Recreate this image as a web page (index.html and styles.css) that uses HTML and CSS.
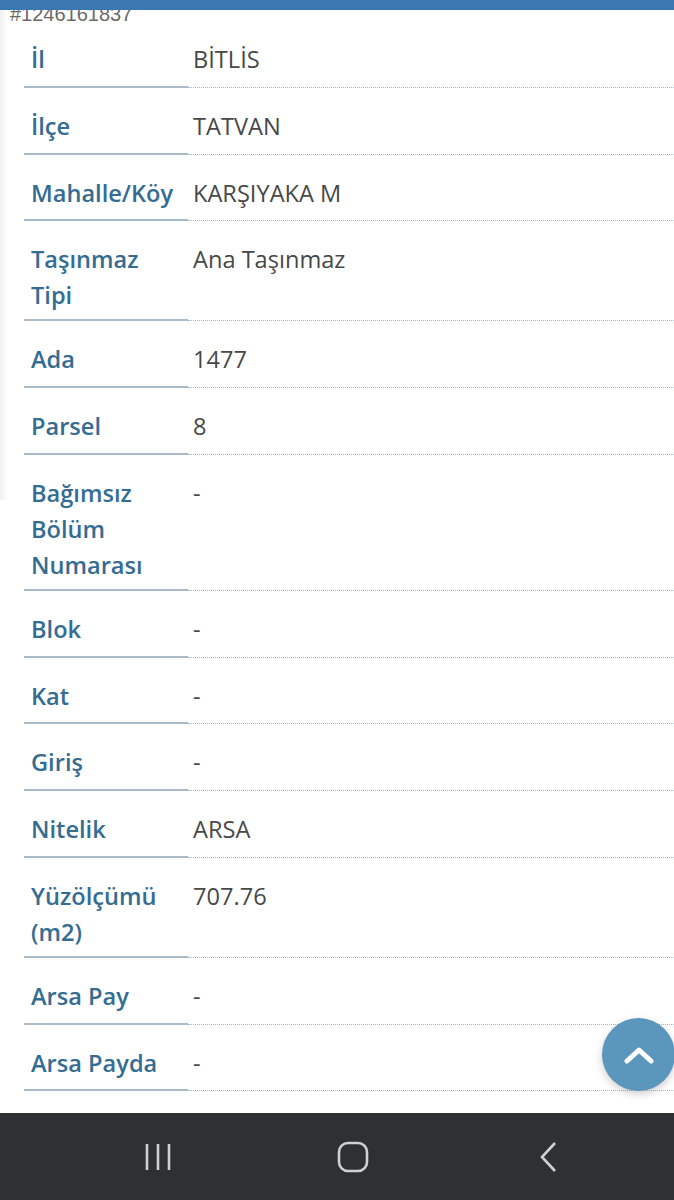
FILE: index.html
```html
<!DOCTYPE html>
<html lang="tr">
<head>
    <meta charset="UTF-8">
    <meta name="viewport" content="width=device-width, initial-scale=1.0">
    <title>Taşınmaz Bilgileri</title>
    <link rel="stylesheet" href="styles.css">
</head>
<body>
<div class="top-bar"></div>
<div class="sheet">
    <div class="record-id">#1246161837</div>
    <dl class="info-list">
        <div class="info-row"><dt>İl</dt><dd>BİTLİS</dd></div>
        <div class="info-row"><dt>İlçe</dt><dd>TATVAN</dd></div>
        <div class="info-row"><dt>Mahalle/Köy</dt><dd>KARŞIYAKA M</dd></div>
        <div class="info-row"><dt>Taşınmaz Tipi</dt><dd>Ana Taşınmaz</dd></div>
        <div class="info-row"><dt>Ada</dt><dd>1477</dd></div>
        <div class="info-row"><dt>Parsel</dt><dd>8</dd></div>
        <div class="info-row"><dt>Bağımsız Bölüm Numarası</dt><dd>-</dd></div>
        <div class="info-row"><dt>Blok</dt><dd>-</dd></div>
        <div class="info-row"><dt>Kat</dt><dd>-</dd></div>
        <div class="info-row"><dt>Giriş</dt><dd>-</dd></div>
        <div class="info-row"><dt>Nitelik</dt><dd>ARSA</dd></div>
        <div class="info-row"><dt>Yüzölçümü (m2)</dt><dd>707.76</dd></div>
        <div class="info-row"><dt>Arsa Pay</dt><dd>-</dd></div>
        <div class="info-row"><dt>Arsa Payda</dt><dd>-</dd></div>
    </dl>
</div>

<button class="scroll-top" type="button" aria-label="Yukarı">
    <svg width="30" height="18" viewBox="0 0 30 18">
        <path d="M3 15 L15 4 L27 15" fill="none" stroke="#fff" stroke-width="5" stroke-linecap="round" stroke-linejoin="round"/>
    </svg>
</button>

<nav class="system-nav">
    <svg width="30" height="30" viewBox="0 0 30 30">
        <path d="M4 2 V28 M15 2 V28 M26 2 V28" stroke="#cfd0d2" stroke-width="2.6"/>
    </svg>
    <svg width="32" height="32" viewBox="0 0 32 32">
        <rect x="2" y="2" width="28" height="28" rx="9" fill="none" stroke="#cfd0d2" stroke-width="2.6"/>
    </svg>
    <svg width="20" height="32" viewBox="0 0 20 32">
        <path d="M17 2 L4 16 L17 30" fill="none" stroke="#cfd0d2" stroke-width="2.6"/>
    </svg>
</nav>
</body>
</html>
```

FILE: styles.css
```css
body {
    margin: 0;
    background: #fff;
    font-family: "Open Sans", "Noto Sans", sans-serif;
}

.top-bar {
    position: fixed;
    top: 0;
    left: 0;
    right: 0;
    height: 10px;
    background: #3b77b1;
    z-index: 5;
}

.sheet {
    background-image: linear-gradient(to right, #f1f1f1, #ffffff);
    background-size: 8px 500px;
    background-repeat: no-repeat;
    padding-bottom: 110px;
}

.record-id {
    height: 21px;
    padding-left: 10px;
    font-family: "Liberation Sans", Arial, sans-serif;
    font-size: 20px;
    line-height: 28px;
    color: #6a6a6a;
}

.info-list {
    margin: 0 0 0 24px;
}

.info-row {
    display: grid;
    grid-template-columns: 164px 1fr;
}

.info-row dt,
.info-row dd {
    margin: 0;
    padding: 20px 0 6px;
    min-height: 66.75px;
    box-sizing: border-box;
    font-size: 23.6px;
    line-height: 36px;
}

.info-row dt {
    padding-left: 7px;
    padding-right: 6px;
    font-weight: 600;
    color: #356c92;
    border-bottom: 2px solid #a9bbc8;
}

.info-row dd {
    padding-left: 5px;
    color: #484848;
    border-bottom: 1px dotted #9fb6c9;
}

.scroll-top {
    position: fixed;
    right: -1px;
    bottom: 109px;
    width: 73px;
    height: 73px;
    border: none;
    border-radius: 50%;
    background: #5b96bd;
    box-shadow: 0 3px 8px rgba(0, 0, 0, 0.2);
    display: flex;
    align-items: center;
    justify-content: center;
    padding: 0;
}

.system-nav {
    position: fixed;
    left: 0;
    right: 0;
    bottom: 0;
    height: 87px;
    background: #2f3034;
    display: grid;
    grid-template-columns: repeat(3, 195px);
    align-items: center;
    justify-items: center;
    padding-left: 60px;
}
```
